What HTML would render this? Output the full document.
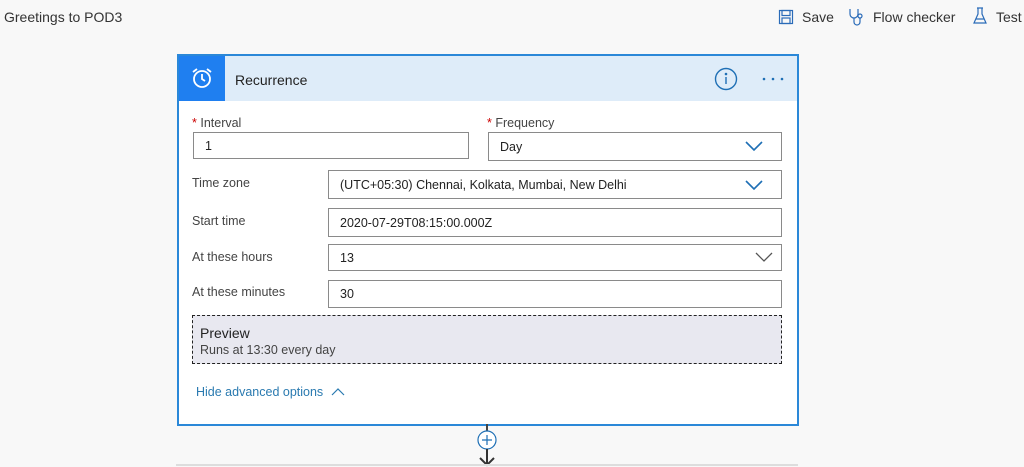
<!DOCTYPE html><html><head><style>
body{margin:0;width:1024px;height:467px;background:#f8f8f8;font-family:"Liberation Sans",sans-serif;position:relative;overflow:hidden;color:#333}
.a{position:absolute}
.in{position:absolute;background:#fff;border:1px solid #8a8a8a;box-sizing:border-box;font-size:12.5px;padding-left:11px;display:flex;align-items:center;color:#222}
.lb{position:absolute;font-size:12.5px;color:#444}
.r{color:#c00}
</style></head><body>
<div class="a" style="left:4px;top:9px;font-size:14px;color:#333">Greetings to POD3</div>
<svg class="a" style="left:778px;top:9px" width="16" height="16" viewBox="0 0 16 16" fill="none" stroke="#2a6bb8" stroke-width="1.2"><rect x="1.5" y="1.5" width="13" height="13"/><rect x="4" y="1.5" width="8" height="5"/><rect x="4" y="9" width="8" height="5.5"/></svg>
<div class="a" style="left:802px;top:9px;font-size:14px">Save</div>
<svg class="a" style="left:847px;top:7px" width="20" height="20" viewBox="0 0 20 20" fill="none" stroke="#2a6bb8" stroke-width="1.2"><path d="M3 2v5a4 4 0 0 0 8 0V2M7 11v4a3 3 0 0 0 6 0v-4"/><circle cx="13" cy="9" r="2"/></svg>
<div class="a" style="left:873px;top:9px;font-size:14px">Flow checker</div>
<svg class="a" style="left:972px;top:7px" width="16" height="18" viewBox="0 0 16 18" fill="none" stroke="#2a6bb8" stroke-width="1.2"><path d="M5 1h6M6 1v6L2 16h12L10 7V1M4 12h8"/></svg>
<div class="a" style="left:996px;top:9px;font-size:14px">Test</div>

<div class="a" style="left:177px;top:54px;width:618px;height:368px;border:2px solid #2b88d8;background:#fff"></div>
<div class="a" style="left:179px;top:56px;width:618px;height:45px;background:#deecf9"></div>
<div class="a" style="left:179px;top:56px;width:46px;height:45px;background:#1f7ff0"></div>
<svg class="a" style="left:190px;top:66px" width="24" height="24" viewBox="0 0 24 24" fill="none" stroke="#fff" stroke-width="1.8"><circle cx="12" cy="13" r="8"/><path d="M12 8v5l3 2M3 6l4-3M21 6l-4-3"/></svg>
<div class="a" style="left:235px;top:72px;font-size:14px;color:#222">Recurrence</div>
<svg class="a" style="left:714px;top:67px" width="24" height="24" viewBox="0 0 24 24" fill="none" stroke="#1e6fb5" stroke-width="1.4"><circle cx="12" cy="12" r="10.5"/><path d="M12 10v7"/><circle cx="12" cy="7" r=".6" fill="#1e6fb5"/></svg>
<svg class="a" style="left:762px;top:77px" width="22" height="4" viewBox="0 0 22 4" fill="#1e6fb5"><circle cx="2" cy="2" r="1.3"/><circle cx="11" cy="2" r="1.3"/><circle cx="20" cy="2" r="1.3"/></svg>

<div class="lb" style="left:192px;top:116px"><span class="r">*</span> Interval</div>
<div class="in" style="left:193px;top:132px;width:276px;height:27px">1</div>
<div class="lb" style="left:487px;top:116px"><span class="r">*</span> Frequency</div>
<div class="in" style="left:488px;top:132px;width:294px;height:29px">Day</div>
<svg class="a" style="left:744px;top:140px" width="20" height="12" viewBox="0 0 20 12" fill="none" stroke="#1e6fb5" stroke-width="1.6"><path d="M2 2l8 8 8-8"/></svg>

<div class="lb" style="left:192px;top:176px">Time zone</div>
<div class="in" style="left:328px;top:170px;width:454px;height:29px">(UTC+05:30) Chennai, Kolkata, Mumbai, New Delhi</div>
<svg class="a" style="left:744px;top:179px" width="20" height="12" viewBox="0 0 20 12" fill="none" stroke="#1e6fb5" stroke-width="1.6"><path d="M2 2l8 8 8-8"/></svg>
<div class="lb" style="left:192px;top:214px">Start time</div>
<div class="in" style="left:328px;top:208px;width:454px;height:29px">2020-07-29T08:15:00.000Z</div>
<div class="lb" style="left:192px;top:250px">At these hours</div>
<div class="in" style="left:328px;top:244px;width:454px;height:27px">13</div>
<svg class="a" style="left:755px;top:252px" width="18" height="11" viewBox="0 0 18 11" fill="none" stroke="#555" stroke-width="1.3"><path d="M1 1l8 8 8-8"/></svg>
<div class="lb" style="left:192px;top:285px">At these minutes</div>
<div class="in" style="left:328px;top:280px;width:454px;height:28px">30</div>

<div class="a" style="left:192px;top:315px;width:590px;height:49px;box-sizing:border-box;border:1px dashed #222;background:#e8e8f0"></div>
<div class="a" style="left:200px;top:325px;font-size:14px;color:#222">Preview</div>
<div class="a" style="left:200px;top:343px;font-size:12.5px;color:#444">Runs at 13:30 every day</div>
<div class="a" style="left:196px;top:385px;font-size:12.5px;color:#2a7ab0">Hide advanced options</div>
<svg class="a" style="left:331px;top:387px" width="14" height="9" viewBox="0 0 14 9" fill="none" stroke="#2a7ab0" stroke-width="1.2"><path d="M1 8l6-6 6 6"/></svg>

<div class="a" style="left:486px;top:424px;width:2px;height:8px;background:#444"></div>
<svg class="a" style="left:476px;top:429px" width="22" height="38" viewBox="0 0 22 38" fill="none"><circle cx="11" cy="11" r="9" stroke="#1e6fb5" stroke-width="1.2" fill="#fff"/><path d="M11 6v10M6 11h10" stroke="#1e6fb5" stroke-width="1.2"/><path d="M11 20v17M4 29l7 7 7-7" stroke="#333" stroke-width="2"/></svg>
<div class="a" style="left:176px;top:464px;width:622px;height:2px;background:#ddd"></div>
</body></html>
